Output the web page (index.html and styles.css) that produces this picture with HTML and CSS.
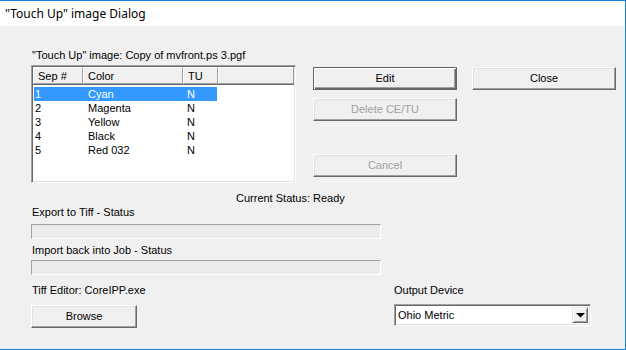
FILE: index.html
```html
<!DOCTYPE html>
<html>
<head>
<meta charset="utf-8">
<link rel="stylesheet" href="styles.css">
</head>
<body>
<div class="window">
  <div class="titlebar">"Touch Up" image Dialog</div>
  <div class="content">
    <div class="top">
      <div class="left">
        <div class="label">"Touch Up" image: Copy of mvfront.ps 3.pgf</div>
        <div class="listbox">
          <div class="header">
            <div class="hcell c1">Sep #</div>
            <div class="hcell c2">Color</div>
            <div class="hcell c3">TU</div>
            <div class="hcell c4"></div>
          </div>
          <div class="rows">
            <div class="row selected"><span class="c1">1</span><span class="c2">Cyan</span><span class="c3">N</span></div>
            <div class="row"><span class="c1">2</span><span class="c2">Magenta</span><span class="c3">N</span></div>
            <div class="row"><span class="c1">3</span><span class="c2">Yellow</span><span class="c3">N</span></div>
            <div class="row"><span class="c1">4</span><span class="c2">Black</span><span class="c3">N</span></div>
            <div class="row"><span class="c1">5</span><span class="c2">Red 032</span><span class="c3">N</span></div>
          </div>
        </div>
      </div>
      <div class="right">
        <div class="btnrow">
          <div class="btn default">Edit</div>
          <div class="btn">Close</div>
        </div>
        <div class="btn disabled delete">Delete CE/TU</div>
        <div class="btn disabled cancel">Cancel</div>
      </div>
    </div>
    <div class="status">Current Status: Ready</div>
    <div class="line">Export to Tiff - Status</div>
    <div class="progress p1"></div>
    <div class="line l2">Import back into Job - Status</div>
    <div class="progress p2"></div>
    <div class="bottom">
      <div class="bleft">
        <div class="line">Tiff Editor: CoreIPP.exe</div>
        <div class="btn browse">Browse</div>
      </div>
      <div class="bright">
        <div class="line">Output Device</div>
        <div class="combo">
          <span class="combotext">Ohio Metric</span>
          <span class="arrow"><svg width="9" height="5" viewBox="0 0 9 5"><polygon points="0,0 9,0 4.5,4.5" fill="#000"/></svg></span>
        </div>
      </div>
    </div>
  </div>
</div>
</body>
</html>
```

FILE: styles.css
```css
html, body {
  margin: 0;
  padding: 0;
  background: #f0f0f0;
}
.window {
  width: 626px;
  height: 350px;
  box-sizing: border-box;
  border-top: 1px solid #1883d7;
  border-right: 1px solid #1883d7;
  border-bottom: 1px solid #1883d7;
  background: #f0f0f0;
  font-family: "Liberation Sans", Arial, sans-serif;
  font-size: 11px;
  color: #000;
  overflow: hidden;
}
.titlebar {
  height: 25px;
  background: #fff;
  font-family: "Noto Sans", "Open Sans", sans-serif;
  font-size: 12px;
  line-height: 25px;
  padding-left: 5px;
  color: #000;
}
.content {
  padding: 23px 0 0 31px;
}
.top {
  display: grid;
  grid-template-columns: 265px 303px;
  column-gap: 17px;
}
.label {
  height: 13px;
  line-height: 13px;
  padding-left: 1px;
  margin-bottom: 3px;
}
.listbox {
  height: 118px;
  box-sizing: border-box;
  background: #fff;
  border-top: 1px solid #a0a0a0;
  border-left: 1px solid #a0a0a0;
  border-right: 1px solid #fff;
  border-bottom: 1px solid #fff;
  box-shadow: inset 1px 1px 0 #696969, inset -1px -1px 0 #e3e3e3;
  padding: 1px;
}
.header {
  display: flex;
  height: 17px;
  background: #f0f0f0;
  border-bottom: 1px solid #696969;
}
.hcell {
  box-sizing: border-box;
  height: 17px;
  line-height: 16px;
  border-left: 1px solid #fff;
  border-top: 1px solid #fff;
  border-right: 1px solid #a0a0a0;
  border-bottom: 1px solid #a0a0a0;
  padding-left: 4px;
}
.hcell.c1 { width: 50px; }
.hcell.c2 { width: 100px; }
.hcell.c3 { width: 35px; }
.hcell.c4 { flex: 1; }
.rows {
  padding-top: 2px;
}
.row {
  display: flex;
  height: 14px;
  line-height: 14px;
  width: 183px;
  margin-left: 1px;
}
.row .c1 { width: 53px; padding-left: 1px; }
.row .c2 { width: 99px; }
.row .c3 { width: 30px; }
.row.selected {
  background: #3399ff;
  color: #fff;
}
.right {
  padding-top: 18px;
}
.btnrow {
  display: flex;
  gap: 15px;
}
.btn {
  box-sizing: border-box;
  width: 144px;
  height: 23px;
  line-height: 20px;
  text-align: center;
  background: #f0f0f0;
  border-top: 1px solid #fff;
  border-left: 1px solid #fff;
  border-right: 1px solid #696969;
  border-bottom: 1px solid #696969;
  box-shadow: inset -1px -1px 0 #a0a0a0, inset 1px 1px 0 #e3e3e3;
}
.btn.default {
  border: 1px solid #646464;
  box-shadow: inset 1px 1px 0 #fff, inset -1px -1px 0 #696969, inset -2px -2px 0 #a0a0a0;
}
.btn.disabled {
  color: #a0a0a0;
}
.delete {
  margin-top: 8px;
}
.cancel {
  margin-top: 33px;
}
.status {
  margin: 9px 0 0 205px;
  height: 13px;
  line-height: 13px;
}
.line {
  height: 13px;
  line-height: 13px;
  padding-left: 1px;
}
.status + .line {
  margin-top: 1px;
}
.progress {
  width: 350px;
  height: 15px;
  box-sizing: border-box;
  background: #ececec;
  border-top: 1px solid #a0a0a0;
  border-left: 1px solid #a0a0a0;
  border-right: 1px solid #fff;
  border-bottom: 1px solid #fff;
}
.p1 { margin-top: 5px; }
.l2 { margin-top: 5px; }
.p2 { margin-top: 3px; }
.bottom {
  display: grid;
  grid-template-columns: 362px 198px;
  margin-top: 9px;
}
.btn.browse {
  width: 106px;
  margin-top: 8px;
}
.combo {
  margin-top: 7px;
  margin-left: 1px;
  width: 197px;
  height: 22px;
  box-sizing: border-box;
  background: #fff;
  border-top: 1px solid #a0a0a0;
  border-left: 1px solid #a0a0a0;
  border-right: 1px solid #fff;
  border-bottom: 1px solid #fff;
  box-shadow: inset 1px 1px 0 #696969, inset -1px -1px 0 #e3e3e3;
  display: flex;
  align-items: center;
  padding: 2px;
}
.combotext {
  flex: 1;
  padding-left: 1px;
  line-height: 16px;
  color: #000;
}
.arrow {
  box-sizing: border-box;
  width: 16px;
  height: 16px;
  background: #f0f0f0;
  border-top: 1px solid #e3e3e3;
  border-left: 1px solid #e3e3e3;
  border-right: 1px solid #696969;
  border-bottom: 1px solid #696969;
  box-shadow: inset 1px 1px 0 #fff, inset -1px -1px 0 #a0a0a0;
  display: flex;
  align-items: center;
  justify-content: center;
}
.arrow svg {
  display: block;
  margin-top: 1px;
}
```
